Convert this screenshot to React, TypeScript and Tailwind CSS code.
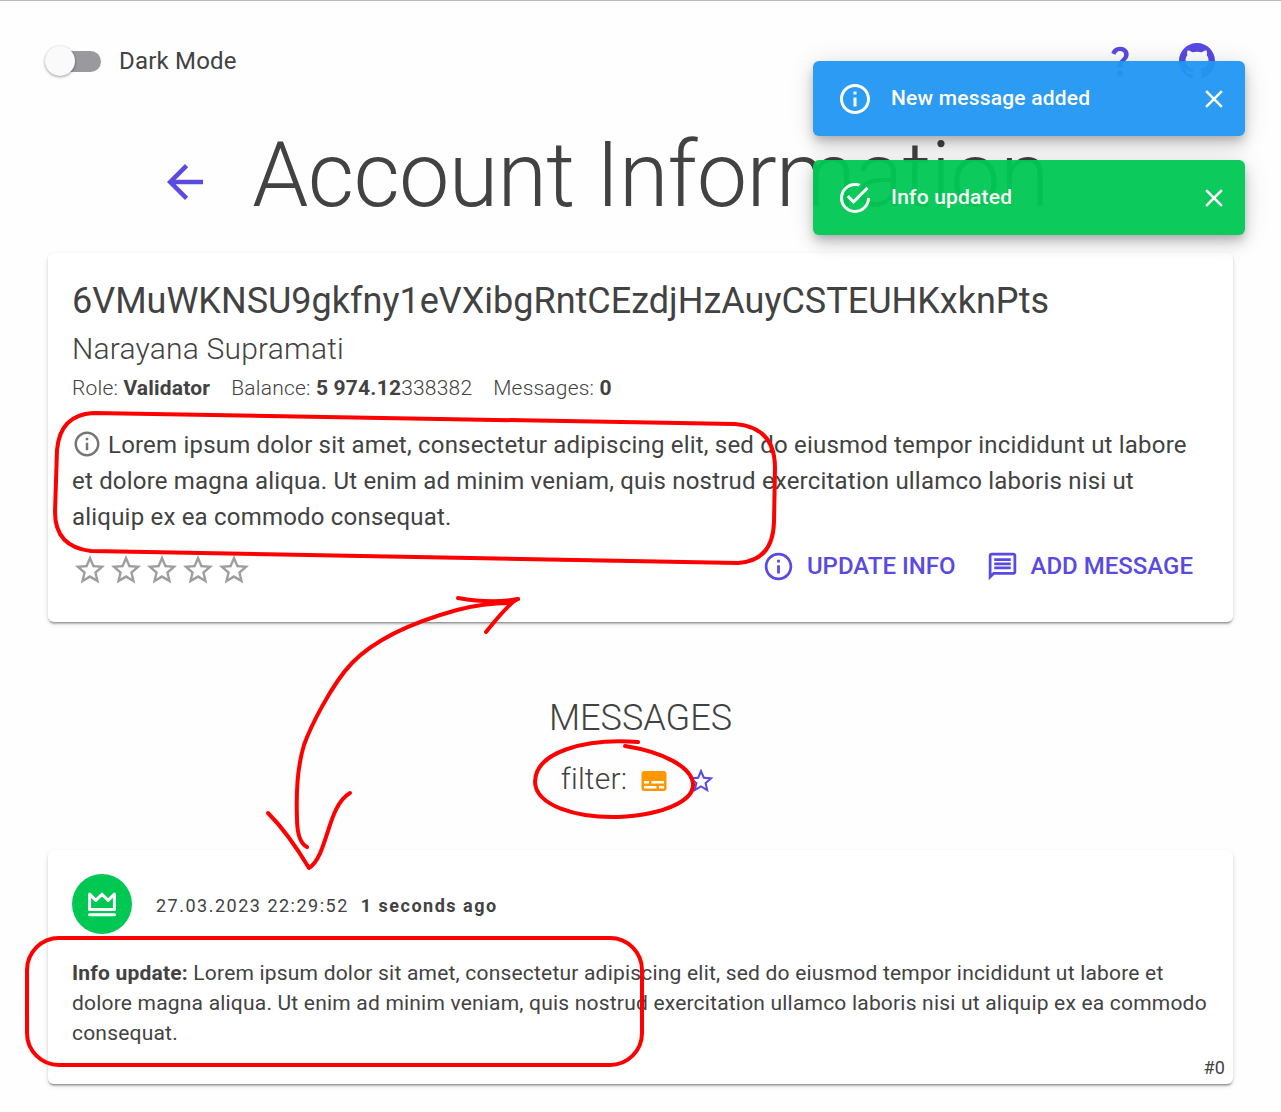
import { useState } from "react";
import type { ReactNode } from "react";
import {
  MdArrowBack,
  MdClose,
  MdInfoOutline,
  MdOutlineMessage,
  MdQuestionMark,
  MdStarOutline,
  MdSubtitles,
} from "react-icons/md";

const LOREM =
  "Lorem ipsum dolor sit amet, consectetur adipiscing elit, sed do eiusmod tempor incididunt ut labore et dolore magna aliqua. Ut enim ad minim veniam, quis nostrud exercitation ullamco laboris nisi ut aliquip ex ea commodo consequat.";

function GithubMark() {
  return (
    <svg viewBox="0 0 16 16" className="size-9 fill-current" aria-hidden="true">
      <path d="M8 0C3.58 0 0 3.58 0 8c0 3.54 2.29 6.53 5.47 7.59.4.07.55-.17.55-.38 0-.19-.01-.82-.01-1.49-2.01.37-2.53-.49-2.69-.94-.09-.23-.48-.94-.82-1.13-.28-.15-.68-.52-.01-.53.63-.01 1.08.58 1.23.82.72 1.21 1.87.87 2.33.66.07-.52.28-.87.51-1.07-1.78-.2-3.64-.89-3.64-3.95 0-.87.31-1.59.82-2.15-.08-.2-.36-1.02.08-2.12 0 0 .67-.21 2.2.82.64-.18 1.32-.27 2-.27.68 0 1.36.09 2 .27 1.53-1.04 2.2-.82 2.2-.82.44 1.1.16 1.92.08 2.12.51.56.82 1.27.82 2.15 0 3.07-1.87 3.75-3.65 3.95.29.25.54.73.54 1.48 0 1.07-.01 1.93-.01 2.2 0 .21.15.46.55.38A8.013 8.013 0 0016 8c0-4.42-3.58-8-8-8z" />
    </svg>
  );
}

function SuccessIcon() {
  return (
    <svg viewBox="0 0 24 24" className="size-9 fill-current" aria-hidden="true">
      <path d="M20,12A8,8 0 0,1 12,20A8,8 0 0,1 4,12A8,8 0 0,1 12,4C12.76,4 13.5,4.11 14.2,4.31L15.77,2.74C14.61,2.26 13.34,2 12,2A10,10 0 0,0 2,12A10,10 0 0,0 12,22A10,10 0 0,0 22,12M7.91,10.08L6.5,11.5L11,16L21,6L19.59,4.58L11,13.17L7.91,10.08Z" />
    </svg>
  );
}

function CrownIcon() {
  return (
    <svg viewBox="0 0 28 25" className="h-[25px] w-7" fill="none" stroke="white" strokeWidth="3" aria-hidden="true">
      <path d="M1.6 2v15.4h24.8V2l-6.2 6.4L14 2.2 7.8 8.4z" strokeLinejoin="round" />
      <path d="M1.5 22.8h25" strokeLinecap="round" />
    </svg>
  );
}

function Card({ children }: { children: ReactNode }) {
  return (
    <section className="rounded-md bg-white shadow-[0_3px_2px_-2px_rgba(0,0,0,0.3),0_2px_2px_0_rgba(0,0,0,0.14),0_2px_5px_0_rgba(0,0,0,0.12)]">
      {children}
    </section>
  );
}

function Toast({ color, icon, text }: { color: string; icon: ReactNode; text: string }) {
  return (
    <div
      role="status"
      className={`flex h-[75px] items-center rounded-md px-6 text-white opacity-95 shadow-[0_5px_8px_-2px_rgba(0,0,0,0.2),0_9px_15px_0_rgba(0,0,0,0.14),0_2px_27px_0_rgba(0,0,0,0.12)] ${color}`}
    >
      {icon}
      <p className="ml-[18px] flex-1 pb-0.5 text-[21px] leading-[30px] font-medium">{text}</p>
      <button type="button" aria-label="Dismiss" className="-mr-2">
        <MdClose className="size-[30px]" />
      </button>
    </div>
  );
}

function Annotations() {
  return (
    <svg
      viewBox="0 0 1281 1112"
      className="pointer-events-none absolute -top-px left-0 h-[1112px] w-[1281px]"
      fill="none"
      stroke="#ff0000"
      strokeWidth="4"
      strokeLinecap="round"
      strokeLinejoin="round"
      aria-hidden="true"
    >
      <path d="M93 413L735 424Q775 427 775 468L774 522Q773 561 738 563L91 551Q55 547 55 512L57 450Q60 415 93 413Z" />
      <rect x="27" y="938" width="615" height="127" rx="32" />
      <path d="M638 742C585 738 535 752 535 782C536 806 577 818 618 817C663 815 694 801 693 784C692 767 663 752 625 746" />
      <path d="M307 847C299 843 297 829 297 818C296 792 297 768 304 745C310 728 331 685 352 663C381 633 428 618 457 610C480 604 495 603 509 603L518 599" />
      <path d="M458 598Q492 604 518 599Q510 602 486 632" />
      <path d="M268 813Q288 833 309 868C328 856 327 806 350 793" />
    </svg>
  );
}

export default function App() {
  const [dark, setDark] = useState(false);
  return (
    <div className="relative min-h-[1112px] overflow-hidden border-t border-[#b0bec5] bg-[#fefefe] px-12 pt-6 pb-7 font-[Roboto,sans-serif] tracking-[0.0125em] text-[#424242]">
      <header className="flex h-18 items-center justify-between">
        <label className="flex items-center text-2xl">
          <span className="relative mr-[18px] -ml-[3px] flex h-[30px] w-14 items-center justify-end">
            <input
              type="checkbox"
              role="switch"
              checked={dark}
              onChange={(e) => setDark(e.target.checked)}
              className="peer h-[21px] w-12 appearance-none rounded-full bg-[#9a9a9e]"
            />
            <span className="pointer-events-none absolute left-0 size-[30px] rounded-full bg-[#fafafa] shadow-[0_1px_3px_rgba(0,0,0,0.4)] peer-checked:left-[26px]" />
          </span>
          Dark Mode
        </label>
        <nav className="flex items-center gap-10 pr-[18px] text-[#594ae2]">
          <a href="#help" aria-label="Help">
            <MdQuestionMark className="size-[38px]" />
          </a>
          <a href="#github" aria-label="GitHub">
            <GithubMark />
          </a>
        </nav>
      </header>

      <div className="flex h-39 items-center justify-center gap-10 pr-[74px]">
        <a href="#back" aria-label="Back" className="mt-3.5 text-[#594ae2]">
          <MdArrowBack className="size-[54px]" />
        </a>
        <h1 className="pt-0.5 text-[90px] leading-none font-light tracking-[-0.0083em]">Account Information</h1>
      </div>

      <main>
        <Card>
          <div className="px-6 pt-6 pb-[29px]">
            <h2 className="text-4xl leading-[48px] tracking-normal">6VMuWKNSU9gkfny1eVXibgRntCEzdjHzAuyCSTEUHKxknPts</h2>
            <p className="text-3xl leading-[48px] font-light">Narayana Supramati</p>
            <p className="flex gap-[21px] text-[21px] leading-[30px] font-light">
              <span>
                Role: <b className="font-bold">Validator</b>
              </span>
              <span>
                Balance: <b className="font-bold">5 974.12</b>338382
              </span>
              <span>
                Messages: <b className="font-bold">0</b>
              </span>
            </p>
            <p className="mt-6 text-2xl leading-9">
              <MdInfoOutline className="mr-1.5 inline size-[30px] align-[-6px] text-[#757575]" />
              {LOREM}
            </p>
            <div className="mt-1 flex h-[54px] items-center justify-between">
              <div className="flex pt-2 text-[#9e9e9e]">
                {[1, 2, 3, 4, 5].map((n) => (
                  <button key={n} type="button" aria-label={`Rate ${n}`} className="flex size-9 items-center justify-center">
                    <MdStarOutline className="size-9" />
                  </button>
                ))}
              </div>
              <div className="flex text-2xl font-medium tracking-normal text-[#594ae2]">
                <button type="button" className="flex items-center gap-3 px-4">
                  <MdInfoOutline className="size-[33px]" />
                  UPDATE INFO
                </button>
                <button type="button" className="flex items-center gap-3 pr-4 pl-3.5">
                  <MdOutlineMessage className="size-[33px]" />
                  ADD MESSAGE
                </button>
              </div>
            </div>
          </div>
        </Card>

        <h2 className="mt-18 text-center text-4xl leading-[48px] font-light tracking-normal">MESSAGES</h2>
        <div className="mt-3 mb-12 flex h-12 items-center justify-center pt-0.5 pr-1 text-3xl font-light">
          <span className="mr-3">filter:</span>
          <button type="button" aria-label="Info messages" className="mr-[17px] pt-1 text-[#ff9800]">
            <MdSubtitles className="size-[30px]" />
          </button>
          <button type="button" aria-label="Rated messages" className="pt-1 text-[#594ae2]">
            <MdStarOutline className="size-[30px]" />
          </button>
        </div>

        <Card>
          <article className="px-6 pt-6">
            <div className="flex items-center gap-6">
              <span className="flex size-[60px] items-center justify-center rounded-full bg-[#00c853]">
                <CrownIcon />
              </span>
              <p className="pt-1 text-lg tracking-[0.0833em]">
                <time>27.03.2023 22:29:52</time>
                <b className="ml-3 font-bold">1 seconds ago</b>
              </p>
            </div>
            <p className="mt-6 text-[21px] leading-[30px]">
              <b className="font-bold">Info update:</b> {LOREM}
            </p>
          </article>
          <p className="h-9 px-2 pt-1.5 text-right text-lg">#0</p>
        </Card>
      </main>

      <div className="absolute top-[60px] right-9 flex w-[432px] flex-col gap-6">
        <Toast color="bg-[#2196f3]" icon={<MdInfoOutline className="size-9" />} text="New message added" />
        <Toast color="bg-[#00c853]" icon={<SuccessIcon />} text="Info updated" />
      </div>

      <Annotations />
    </div>
  );
}
